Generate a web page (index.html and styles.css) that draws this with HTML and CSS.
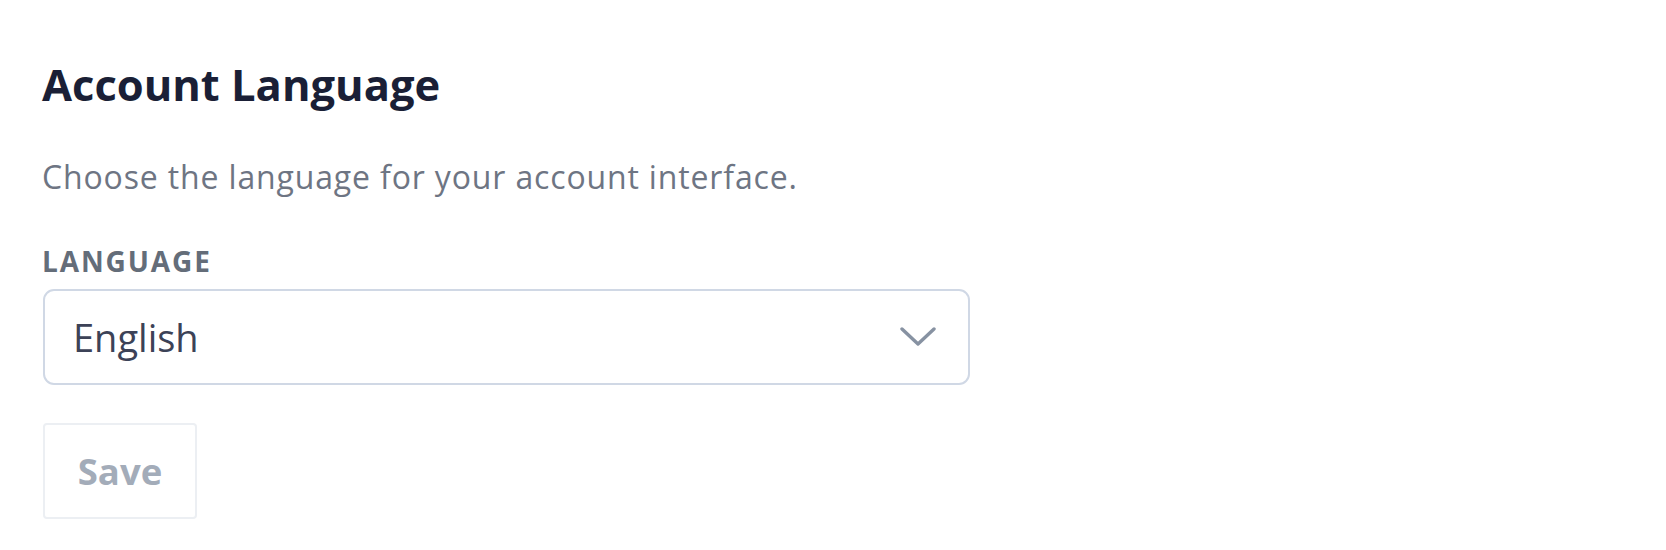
FILE: index.html
```html
<!DOCTYPE html>
<html lang="en">
<head>
<meta charset="utf-8">
<title>Account Language</title>
<link rel="stylesheet" href="styles.css">
</head>
<body>
<main class="page">
  <section class="settings">
    <h1 class="title">Account Language</h1>
    <p class="desc">Choose the language for your account interface.</p>
    <label class="field-label" for="lang">Language</label>
    <div class="select">
      <span class="select-value" id="lang">English</span>
      <svg class="chevron" viewBox="0 0 36 20" width="36" height="20" aria-hidden="true">
        <path d="M2 2 L18 17 L34 2" fill="none" stroke="#8792a2" stroke-width="3.4" stroke-linecap="round" stroke-linejoin="round"/>
      </svg>
    </div>
    <button class="save" type="button" disabled>Save</button>
  </section>
</main>
</body>
</html>
```

FILE: styles.css
```css
html, body {
  margin: 0;
  padding: 0;
  background: #ffffff;
}

body {
  font-family: "Open Sans", "Noto Sans", sans-serif;
}

.page {
  padding: 58px 0 0 42px;
}

.settings {
  display: flex;
  flex-direction: column;
  align-items: flex-start;
}

.title {
  margin: 0;
  font-size: 43.5px;
  line-height: 54px;
  font-weight: 700;
  color: #1a1f36;
}

.desc {
  margin: 42px 0 0;
  font-size: 32px;
  line-height: 45px;
  letter-spacing: 0.85px;
  color: #6e7583;
}

.field-label {
  margin-top: 44px;
  font-size: 28px;
  line-height: 36px;
  font-weight: 700;
  text-transform: uppercase;
  letter-spacing: 1.9px;
  color: #646d79;
}

.select {
  margin-top: 10px;
  box-sizing: border-box;
  width: 927px;
  height: 96px;
  margin-left: 1px;
  border: 2px solid #d0d8e5;
  border-radius: 11px;
  display: flex;
  align-items: center;
  justify-content: space-between;
  padding: 0 32px 0 28px;
}

.select-value {
  font-size: 38px;
  color: #3c4257;
}

.chevron {
  display: block;
}

.save {
  margin-top: 38px;
  margin-left: 1px;
  box-sizing: border-box;
  width: 154px;
  height: 96px;
  border: 2px solid #eceff3;
  border-radius: 4px;
  background: #ffffff;
  font-family: "Open Sans", "Noto Sans", sans-serif;
  font-size: 36.5px;
  font-weight: 700;
  color: #a3acb9;
  padding: 0;
}
```
